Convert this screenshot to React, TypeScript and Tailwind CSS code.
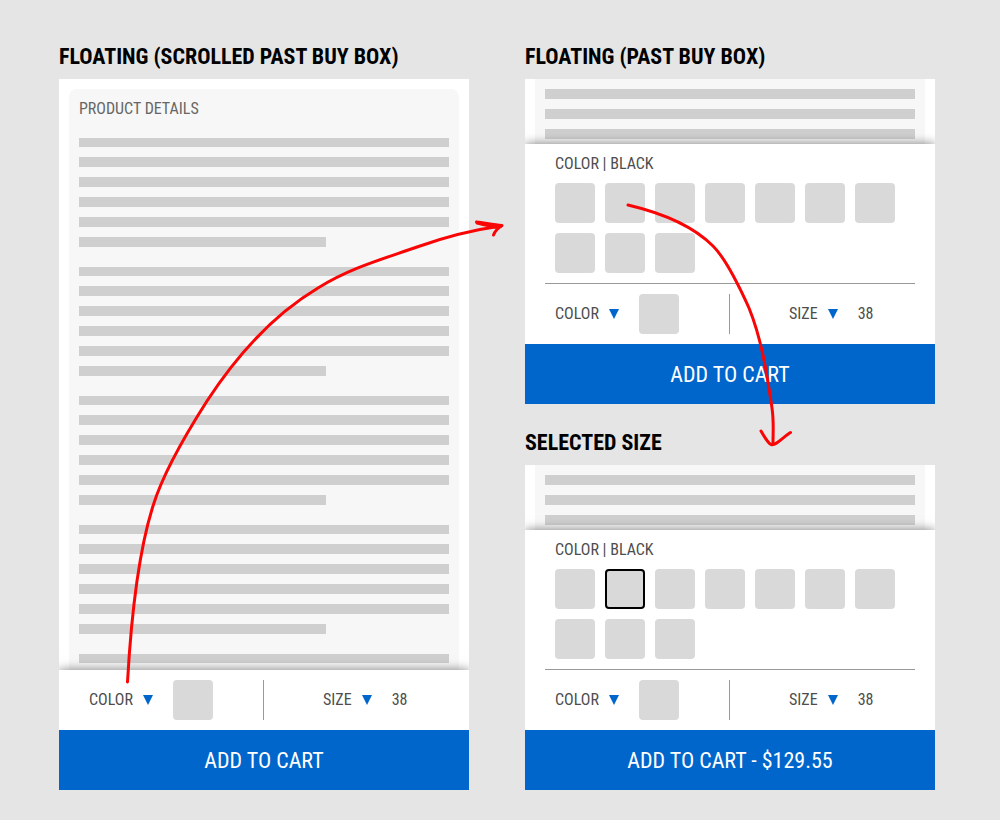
import React, { useState } from 'react';

const COLOR_COUNT = 10;

const TextLines: React.FC<{ count?: number }> = ({ count = 6 }) => (
  <div className="flex flex-col gap-[10px]">
    {Array.from({ length: count }, (_, i) => (
      <div key={i} className={`bg-[#cfcfcf] ${i === 0 ? 'h-[9px]' : 'h-[10px]'} ${i === 5 ? 'w-2/3' : 'w-full'}`} />
    ))}
  </div>
);

const Triangle: React.FC = () => (
  <svg className="h-[10px] w-[10px] shrink-0" viewBox="0 0 10 10" aria-hidden="true">
    <path d="M0 0H10L5 10Z" fill="#0066cc" />
  </svg>
);

const OptionBar: React.FC = () => (
  <div className="flex h-[60px] items-center text-[16px] leading-5 text-[#4d4d4d]">
    <div className="flex h-10 w-1/2 items-center border-r border-[#999999] pl-[30px]">
      <button type="button" className="flex items-center gap-[10px]">
        COLOR <Triangle />
      </button>
      <div className="ml-5 h-10 w-10 rounded bg-[#d9d9d9]" />
    </div>
    <div className="flex w-1/2 items-center gap-5 pl-[59px]">
      <button type="button" className="flex items-center gap-[10px]">
        SIZE <Triangle />
      </button>
      <span>38</span>
    </div>
  </div>
);

const CartButton: React.FC<{ price?: string }> = ({ price }) => (
  <button type="button" className="relative h-[60px] w-full shrink-0 bg-[#0066cc] pt-0.5 text-[22px] leading-7 text-white">
    ADD TO CART{price ? ` - ${price}` : ''}
  </button>
);

const FloatingSheet: React.FC<{ children: React.ReactNode }> = ({ children }) => (
  <div className="relative shrink-0 bg-white shadow-[0_0_10px_rgba(0,0,0,0.5)]">{children}</div>
);

const ColorPicker: React.FC<{ initial?: number }> = ({ initial }) => {
  const [selected, setSelected] = useState<number | undefined>(initial);

  return (
    <div className="mx-5 border-b border-[#999999] px-[10px] pt-[10px] pb-[10px]">
      <p className="mb-[9px] text-[16px] leading-5 text-[#4d4d4d]">COLOR | BLACK</p>
      <div className="flex flex-wrap gap-[10px]">
        {Array.from({ length: COLOR_COUNT }, (_, i) => (
          <button
            key={i}
            type="button"
            aria-label={`Color ${i + 1}`}
            aria-pressed={selected === i}
            onClick={() => setSelected(i)}
            className={`h-10 w-10 rounded bg-[#d9d9d9] ${selected === i ? 'border-2 border-black' : ''}`}
          />
        ))}
      </div>
    </div>
  );
};

const PickerScreen: React.FC<{ title: string; initial?: number; price?: string }> = ({ title, initial, price }) => (
  <section>
    <h2 className="mb-2 text-[22px] leading-7 font-bold text-black">{title}</h2>
    <div className="overflow-hidden bg-white">
      <div className="mx-[10px] h-[65px] bg-[#f7f7f7] p-[10px]">
        <div className="flex flex-col gap-[10px]">
          <div className="h-[10px] bg-[#cfcfcf]" />
          <div className="h-[10px] bg-[#cfcfcf]" />
          <div className="h-[10px] bg-[#cfcfcf]" />
        </div>
      </div>
      <FloatingSheet>
        <ColorPicker initial={initial} />
        <OptionBar />
      </FloatingSheet>
      <CartButton price={price} />
    </div>
  </section>
);

const App: React.FC = () => {
  return (
    <div className="min-h-screen bg-[#e5e5e5] font-['Roboto_Condensed',Roboto,sans-serif]">
      <main className="relative mx-auto grid max-w-[1000px] grid-cols-2 gap-14 pt-[43px] pr-[65px] pb-[30px] pl-[59px]">
        <section className="flex flex-col">
          <h2 className="mb-2 text-[22px] leading-7 font-bold text-black">FLOATING (SCROLLED PAST BUY BOX)</h2>
          <div className="flex flex-1 flex-col overflow-hidden bg-white">
            {/* only as tall as the space above the sheet, the rest of the details are cut off */}
            <div className="min-h-0 grow basis-[0px] px-[10px] pt-[10px]">
              <div className="rounded-lg bg-[#f7f7f7] p-[10px]">
                <h3 className="mb-[19px] text-[16px] leading-5 text-[#666666]">PRODUCT DETAILS</h3>
                <div className="flex flex-col gap-5">
                  <TextLines />
                  <TextLines />
                  <TextLines />
                  <TextLines />
                  <TextLines count={1} />
                </div>
              </div>
            </div>
            <FloatingSheet>
              <OptionBar />
            </FloatingSheet>
            <CartButton />
          </div>
        </section>

        <div className="flex flex-col gap-[25px]">
          <PickerScreen title="FLOATING (PAST BUY BOX)" />
          <PickerScreen title="SELECTED SIZE" initial={1} price="$129.55" />
        </div>

        {/* Flow arrows between the screens */}
        <svg
          className="pointer-events-none absolute top-0 left-0 w-full"
          viewBox="0 0 1000 820"
          fill="none"
          stroke="#fa0505"
          strokeWidth="3"
          strokeLinecap="round"
          strokeLinejoin="round"
          aria-hidden="true"
        >
          <path d="M127.500 682C131 620 139 550 153 506C163 473 184 437 207 401C239 352 276 313 318 288C350 268 383 259 417 247C445 237 472 230 501 226" />
          <path d="M476.500 222C485 223 494 225 502 225.500C498 228 495 231 493.500 235M477 223C484 225 491 226 497 227.500" />
          <path d="M628 205C662 213 692 225 713 246C727 260 740 288 749 308C762 340 767 375 772 408C774 422 773 432 773 443" />
          <path d="M761 431C765 438 768 443 771 444.500C776 446 783 437 790.500 432.500" />
        </svg>
      </main>
    </div>
  );
};

export default App;
